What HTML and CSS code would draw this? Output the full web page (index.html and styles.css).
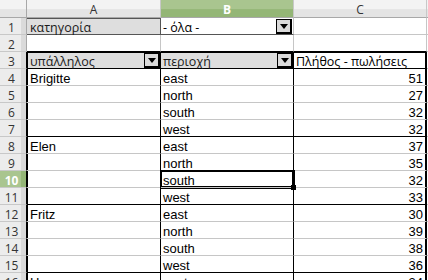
FILE: index.html
```html
<!DOCTYPE html>
<html>
<head>
<meta charset="utf-8">
<link rel="stylesheet" href="styles.css">
</head>
<body>
<div class="sheet">
  <div class="corner"></div>
  <div class="colhead">A</div>
  <div class="colhead sel">B</div>
  <div class="colhead">C</div>
  <div class="colhead last"></div>

  <div class="rowhead">1</div>
  <div class="cell field">κατηγορία</div>
  <div class="cell filter"><span>- όλα -</span><span class="dd"></span></div>
  <div class="cell"></div>
  <div class="cell last"></div>

  <div class="rowhead">2</div>
  <div class="cell r2"></div>
  <div class="cell r2"></div>
  <div class="cell r2"></div>
  <div class="cell last"></div>

  <div class="rowhead pv">3</div>
  <div class="cell field hdr a"><span>υπάλληλος</span><span class="dd"></span></div>
  <div class="cell field hdr b"><span>περιοχή</span><span class="dd"></span></div>
  <div class="cell hdr c">Πλήθος - πωλήσεις</div>
  <div class="cell last"></div>

  <div class="rowhead pv">4</div>
  <div class="cell a">Brigitte</div>
  <div class="cell b">east</div>
  <div class="cell c num">51</div>
  <div class="cell last"></div>

  <div class="rowhead pv">5</div>
  <div class="cell a"></div>
  <div class="cell b">north</div>
  <div class="cell c num">27</div>
  <div class="cell last"></div>

  <div class="rowhead pv">6</div>
  <div class="cell a"></div>
  <div class="cell b">south</div>
  <div class="cell c num">32</div>
  <div class="cell last"></div>

  <div class="rowhead pv">7</div>
  <div class="cell a grp"></div>
  <div class="cell b grp">west</div>
  <div class="cell c num grp">32</div>
  <div class="cell last"></div>

  <div class="rowhead pv">8</div>
  <div class="cell a">Elen</div>
  <div class="cell b">east</div>
  <div class="cell c num">37</div>
  <div class="cell last"></div>

  <div class="rowhead pv">9</div>
  <div class="cell a"></div>
  <div class="cell b">north</div>
  <div class="cell c num">35</div>
  <div class="cell last"></div>

  <div class="rowhead pv sel">10</div>
  <div class="cell a"></div>
  <div class="cell b cursor">south<span class="handle"></span></div>
  <div class="cell c num">32</div>
  <div class="cell last"></div>

  <div class="rowhead pv">11</div>
  <div class="cell a grp"></div>
  <div class="cell b grp">west</div>
  <div class="cell c num grp">33</div>
  <div class="cell last"></div>

  <div class="rowhead pv">12</div>
  <div class="cell a">Fritz</div>
  <div class="cell b">east</div>
  <div class="cell c num">30</div>
  <div class="cell last"></div>

  <div class="rowhead pv">13</div>
  <div class="cell a"></div>
  <div class="cell b">north</div>
  <div class="cell c num">39</div>
  <div class="cell last"></div>

  <div class="rowhead pv">14</div>
  <div class="cell a"></div>
  <div class="cell b">south</div>
  <div class="cell c num">38</div>
  <div class="cell last"></div>

  <div class="rowhead pv">15</div>
  <div class="cell a grp"></div>
  <div class="cell b grp">west</div>
  <div class="cell c num grp">36</div>
  <div class="cell last"></div>

  <div class="rowhead pv">16</div>
  <div class="cell a">Hans</div>
  <div class="cell b">east</div>
  <div class="cell c num">34</div>
  <div class="cell last"></div>
</div>
</body>
</html>
```
FILE: styles.css
```css
html, body {
  margin: 0;
  padding: 0;
  background: #ffffff;
  overflow: hidden;
}
.sheet {
  display: grid;
  grid-template-columns: 27px 134px 133px 133px 1fr;
  grid-template-rows: 18px repeat(16, 17px);
  width: 428px;
  font-family: "Liberation Sans", Arial, sans-serif;
  font-size: 13px;
  color: #000;
}
.corner, .colhead {
  background: linear-gradient(#f3f3f3 0, #f3f3f3 55%, #e4e4e4 56%, #e4e4e4 100%);
  border-right: 1px solid #c8c8c8;
  border-bottom: 1px solid #a8a8a8;
  box-sizing: border-box;
}
.corner {
  border-right: 1px solid #a8a8a8;
}
.colhead {
  display: flex;
  align-items: center;
  justify-content: center;
  font-family: "Open Sans", "DejaVu Sans", sans-serif;
  font-size: 12px;
  color: #333;
  padding-top: 1px;
}
.colhead.sel {
  background: linear-gradient(#a9c58f 0, #a9c58f 55%, #94b676 56%, #94b676 100%);
  color: #fff;
  font-weight: bold;
}
.colhead.last { border-right: none; }
.rowhead {
  background: linear-gradient(90deg, #ececec 0, #ececec 80%, #dadada 81%, #dadada 100%);
  border-right: 1px solid #a8a8a8;
  border-bottom: 1px solid #c8c8c8;
  box-sizing: border-box;
  display: flex;
  align-items: center;
  justify-content: center;
  font-family: "Open Sans", "DejaVu Sans", sans-serif;
  font-size: 12px;
  color: #333;
  padding-right: 3px;
  padding-top: 2px;
}
.rowhead.pv {
  border-right: 1px solid #000;
}
.rowhead.sel {
  background: linear-gradient(90deg, #a9c58f 0, #a9c58f 80%, #94b676 81%, #94b676 100%);
  color: #fff;
  font-weight: bold;
}
.cell {
  box-sizing: border-box;
  border-right: 1px solid #c6c6c6;
  border-bottom: 1px solid #c6c6c6;
  display: flex;
  align-items: flex-start;
  padding-left: 2px;
  padding-top: 4px;
  white-space: nowrap;
  overflow: visible;
  line-height: 12px;
  position: relative;
}
.cell.last { border-right: none; }
.cell.field {
  background: #dedede;
  font-family: "Open Sans", "DejaVu Sans", sans-serif;
  font-size: 12.5px;
  color: #1a1a1a;
}
.cell.field:not(.hdr) {
  border: 1px solid #555;
  border-left: none;
  padding-left: 3px;
  padding-top: 3px;
}
.cell.filter {
  font-family: "Open Sans", "DejaVu Sans", sans-serif;
  font-size: 12.5px;
  border-bottom: 1px solid #555;
  padding-right: 1px;
}
.cell.filter, .cell.hdr.a, .cell.hdr.b {
  justify-content: space-between;
}
.dd {
  width: 16px;
  height: 15px;
  box-sizing: border-box;
  background: #dadada;
  border: 1px solid #000;
  border-width: 1px 2px 2px 1px;
  display: flex;
  align-items: center;
  justify-content: center;
  flex: none;
  align-self: flex-end;
  margin-bottom: 0;
}
.dd::after {
  content: "";
  width: 0;
  height: 0;
  border-left: 4px solid transparent;
  border-right: 4px solid transparent;
  border-top: 5px solid #000;
}
.cell.r2 { border-bottom: 1px solid #000; }
.cell.hdr {
  border-bottom: 1px solid #000;
  box-shadow: inset 0 1px 0 #000;
}
.cell.hdr.c {
  font-family: "Open Sans", "DejaVu Sans", sans-serif;
  font-size: 12.5px;
}
.cell.hdr.b { padding-right: 0; }
.cell.a {
  border-right: 1px solid #000;
  box-shadow: inset 1px 0 0 #000;
  padding-left: 3px;
}
.cell.hdr.a {
  box-shadow: inset 1px 1px 0 #000;
  padding-right: 0;
}
.cell.b { border-right: 1px solid #000; }
.cell.c {
  border-right: 1px solid #000;
  box-shadow: inset -1px 0 0 #000;
}
.cell.hdr.c { box-shadow: inset -1px 1px 0 #000; }
.cell.num {
  justify-content: flex-end;
  padding-right: 3px;
}
.cell.grp { border-bottom: 1px solid #000; }
.cell.cursor {
  box-shadow: 0 0 0 1px #000, inset 0 0 0 1px #000;
  z-index: 2;
}
.handle {
  position: absolute;
  right: -3px;
  bottom: -3px;
  width: 5px;
  height: 5px;
  background: #000;
}
```
